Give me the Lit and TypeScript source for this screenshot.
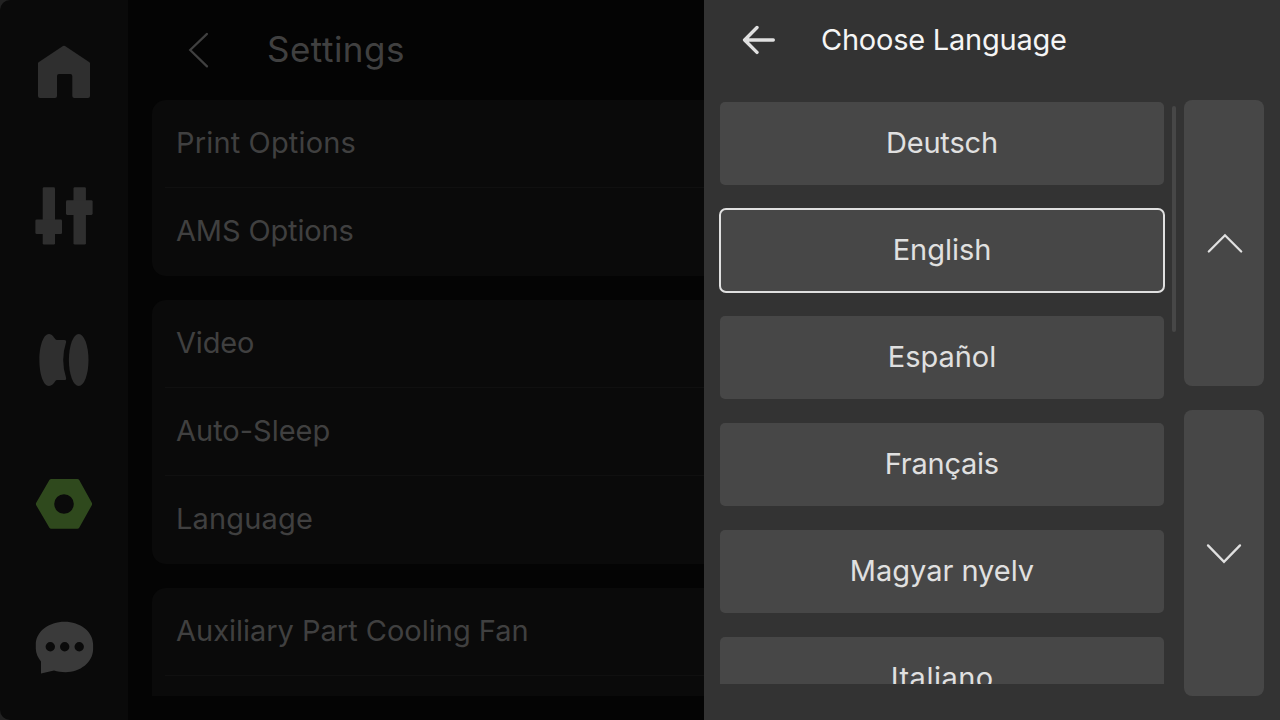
import { LitElement, html, css } from "lit";
import { customElement, property } from "lit/decorators.js";

interface Label {
  text: string;
  width: number;
}

const CARDS: Label[][] = [
  [
    { text: "Print Options", width: 176.5 },
    { text: "AMS Options", width: 176.5 },
  ],
  [
    { text: "Video", width: 77 },
    { text: "Auto-Sleep", width: 153.5 },
    { text: "Language", width: 134 },
  ],
  [
    { text: "Auxiliary Part Cooling Fan", width: 350.5 },
    { text: "", width: 0 },
  ],
];

const LANGUAGES: Label[] = [
  { text: "Deutsch", width: 108 },
  { text: "English", width: 94.5 },
  { text: "Español", width: 104.5 },
  { text: "Français", width: 111 },
  { text: "Magyar nyelv", width: 182 },
  { text: "Italiano", width: 99 },
];

const pen = document.createElement("canvas").getContext("2d")!;

/* A line of text tracked so that its ink spans a given width. */
@customElement("tracked-text")
export class TrackedText extends LitElement {
  static styles = css`
    :host {
      display: block;
      white-space: pre;
    }
    .line {
      display: block;
    }
  `;
  @property() text = "";
  @property({ type: Number }) width = 0;
  @property({ type: Number }) size = 29;

  render() {
    if (this.text.length < 2) return html`<span class="line">${this.text}</span>`;
    pen.font = `400 ${this.size}px Inter`;
    const m = pen.measureText(this.text);
    const ink = m.actualBoundingBoxLeft + m.actualBoundingBoxRight;
    const track = (this.width - ink) / (this.text.length - 1);
    return html`<span
      class="line"
      style="letter-spacing:${track.toFixed(3)}px;margin-right:${(-track).toFixed(3)}px"
      >${this.text}</span
    >`;
  }
}

@customElement("nav-bar")
export class NavBar extends LitElement {
  static styles = css`
    :host {
      display: flex;
      flex-direction: column;
      width: 128px;
      flex: none;
      background: #0a0a0a;
      border-radius: 10px 0 0 10px;
    }
    .item {
      flex: 1;
      display: flex;
      align-items: center;
      justify-content: center;
      color: #2f2f2f;
    }
    .active {
      color: #2f491d;
    }
    .chat {
      color: #3a3a3a;
    }
    svg {
      width: 64px;
      height: 64px;
      fill: currentColor;
    }
  `;

  render() {
    return html`
      <div class="item">
        <svg viewBox="0 0 64 64">
          <path
            d="M31 6Q32 5.3 33 6L57.4 22.2Q58 22.7 58 23.4V56Q58 58 56 58H42.3Q40.3 58 40.3 56V36Q40.3 34 38.3 34H27Q25 34 25 36V56Q25 58 23 58H8Q6 58 6 56V23.4Q6 22.7 6.6 22.2Z"
          />
        </svg>
      </div>
      <div class="item">
        <svg viewBox="0 0 64 64">
          <rect x="10.7" y="3.2" width="12.3" height="57.3" rx="1.3" />
          <rect x="3.4" y="35.5" width="26.6" height="14.6" rx="1.3" />
          <rect x="41.5" y="3.2" width="12.4" height="57.3" rx="1.3" />
          <rect x="34" y="16.3" width="26.6" height="14.6" rx="1.3" />
        </svg>
      </div>
      <div class="item">
        <svg viewBox="0 0 64 64">
          <path
            d="M17 6C11.5 6 7.4 17.5 7.4 32S11.5 58 17 58C19.6 58 21.8 55.6 23.6 52.8Q24.1 52.1 25 52.1H32.3Q34.7 52.1 34 49.5Q31.2 41 31.2 32T34 14.5Q34.7 11.9 32.3 11.9H25Q24.1 11.9 23.4 11.2C21.6 9 20 6 17 6Z"
          />
          <ellipse cx="46.7" cy="32" rx="9.8" ry="26" />
        </svg>
      </div>
      <div class="item active">
        <svg viewBox="0 0 64 64">
          <path
            fill-rule="evenodd"
            d="M19.3 7H45.4Q46.6 7 47.2 8L59.8 30.8Q60.4 32 59.8 33.2L47.2 55.7Q46.6 56.8 45.4 56.8H19.3Q18 56.8 17.4 55.7L4.2 33.2Q3.6 32 4.2 30.8L17.4 8Q18 7 19.3 7ZM32 22.2A9.8 9.8 0 1 0 32 41.8A9.8 9.8 0 1 0 32 22.2Z"
          />
        </svg>
      </div>
      <div class="item chat">
        <svg viewBox="0 0 64 64">
          <path
            fill-rule="evenodd"
            d="M32.6 5.8C48 5.8 61.1 15.5 61.1 28.5V33C61.1 46.5 48 56.2 33.5 56.2C29.5 56.2 25.5 55.4 22 54.5L9 57.5V45.5C6 41.5 3.8 37.5 3.8 32.5V28.5C3.8 15.5 17 5.8 32.6 5.8ZM18.3 26A4.7 4.7 0 1 0 18.3 35.4A4.7 4.7 0 1 0 18.3 26ZM32.7 26A4.7 4.7 0 1 0 32.7 35.4A4.7 4.7 0 1 0 32.7 26ZM47.2 26A4.7 4.7 0 1 0 47.2 35.4A4.7 4.7 0 1 0 47.2 26Z"
          />
        </svg>
      </div>
    `;
  }
}

@customElement("settings-page")
export class SettingsPage extends LitElement {
  static styles = css`
    :host {
      display: flex;
      flex-direction: column;
      flex: 1;
      min-width: 0;
      background: #040404;
      color: #404040;
      padding: 0 0 24px 24px;
      box-sizing: border-box;
    }
    .header {
      flex: none;
      height: 100px;
      box-sizing: border-box;
      display: flex;
      align-items: center;
      padding: 0 0 2px 26px;
      gap: 49px;
      font-size: 35px;
    }
    .header svg {
      width: 40px;
      height: 40px;
      margin-top: 2px;
    }
    .cards {
      flex: 1;
      min-height: 0;
      overflow: hidden;
      display: flex;
      flex-direction: column;
      gap: 24px;
    }
    .card {
      flex: none;
      background: #0a0a0a;
      border-radius: 14px 0 0 14px;
      padding-left: 13px;
    }
    .row {
      height: 88px;
      box-sizing: border-box;
      display: flex;
      align-items: center;
      padding: 0 0 3px 11px;
    }
    .row:not(:last-child) {
      border-bottom: 1px solid #101010;
      padding-bottom: 2px;
    }
  `;

  render() {
    return html`
      <div class="header">
        <svg viewBox="0 0 40 40" fill="none" stroke="#404040" stroke-width="2.2">
          <path d="M29 3.9L12.2 20L29 36.4" stroke-linecap="round" />
        </svg>
        <tracked-text text="Settings" width="135" size="35"></tracked-text>
      </div>
      <div class="cards">
        ${CARDS.map(
          (rows) => html`<div class="card">
            ${rows.map(
              (r) => html`<div class="row">
                <tracked-text text=${r.text} width=${r.width}></tracked-text>
              </div>`
            )}
          </div>`
        )}
      </div>
    `;
  }
}

@customElement("language-panel")
export class LanguagePanel extends LitElement {
  static styles = css`
    :host {
      display: flex;
      flex-direction: column;
      flex: none;
      width: 576px;
      background: #333;
      color: #e0e0e0;
    }
    .header {
      flex: none;
      height: 80px;
      display: flex;
      align-items: center;
      padding-left: 35px;
      gap: 42px;
      color: #f5f5f5;
    }
    .header svg {
      width: 40px;
      height: 40px;
    }
    .header tracked-text {
      padding-bottom: 2px;
    }
    .body {
      flex: 1;
      min-height: 0;
      display: flex;
      padding: 20px 16px 24px 14px;
    }
    .list {
      flex: none;
      width: 448px;
      height: 584px;
      box-sizing: border-box;
      padding: 2px 2px 0;
      overflow: hidden;
      display: flex;
      flex-direction: column;
      gap: 24px;
    }
    .language {
      flex: none;
      height: 83px;
      box-sizing: border-box;
      padding-bottom: 2px;
      display: flex;
      align-items: center;
      justify-content: center;
      background: #474747;
      border-radius: 5px;
    }
    .selected {
      border-radius: 6px;
      outline: 2px solid #e0e0e0;
      outline-offset: -1px;
    }
    .thumb {
      flex: none;
      width: 4px;
      height: 226px;
      margin: 6px 8px 0 6px;
      border-radius: 2px;
      background: #474747;
    }
    .pager {
      flex: 1;
      display: flex;
      flex-direction: column;
      gap: 24px;
    }
    .page {
      flex: 1;
      display: flex;
      align-items: center;
      justify-content: center;
      background: #474747;
      border-radius: 8px;
    }
    .page svg {
      width: 40px;
      height: 40px;
    }
  `;

  render() {
    return html`
      <div class="header">
        <svg viewBox="0 0 40 40" fill="none" stroke="#e0e0e0" stroke-width="3.4" stroke-linecap="round" stroke-linejoin="round">
          <path d="M18 7.5L5.6 20L18 32.4M5.6 20H34.3" />
        </svg>
        <tracked-text text="Choose Language" width="244"></tracked-text>
      </div>
      <div class="body">
        <div class="list">
          ${LANGUAGES.map(
            (l) => html`<div class="language ${l.text === "English" ? "selected" : ""}">
              <tracked-text text=${l.text} width=${l.width}></tracked-text>
            </div>`
          )}
        </div>
        <div class="thumb"></div>
        <div class="pager">
          <div class="page">
            <svg viewBox="0 0 40 40" fill="none" stroke="#e0e0e0" stroke-width="2.3" stroke-linecap="round">
              <path d="M4.8 28.5L21 12.3L37.2 28.5" />
            </svg>
          </div>
          <div class="page">
            <svg viewBox="0 0 40 40" fill="none" stroke="#e0e0e0" stroke-width="2.3" stroke-linecap="round">
              <path d="M4 12.4L20 28.8L36 12.4" />
            </svg>
          </div>
        </div>
      </div>
    `;
  }
}

@customElement("app-root")
export class AppRoot extends LitElement {
  static styles = css`
    :host {
      display: flex;
      width: 1280px;
      height: 720px;
      overflow: hidden;
      background: #222;
      font: 400 29px Inter, "Noto Sans", sans-serif;
    }
  `;

  render() {
    return html`<nav-bar></nav-bar><settings-page></settings-page><language-panel></language-panel>`;
  }
}
